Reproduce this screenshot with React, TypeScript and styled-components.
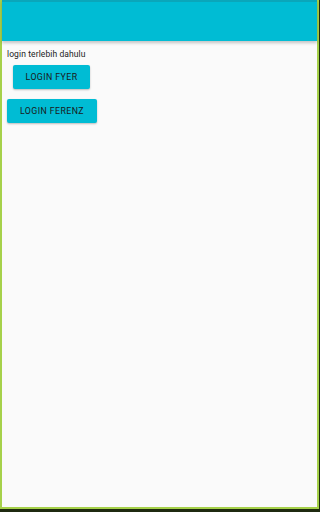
import React from 'react';
import styled, { createGlobalStyle } from 'styled-components';

const GlobalStyle = createGlobalStyle`
  html, body {
    margin: 0;
    padding: 0;
    background: #1f2a10;
  }
  body {
    font-family: Roboto, "Noto Sans", sans-serif;
  }
`;

function App() {
  return (
    <>
      <GlobalStyle />
      <Device>
        <Screen>
          <AppBar>
            <StatusStrip />
          </AppBar>
          <Content>
            <Hint>login terlebih dahulu</Hint>
            <ButtonRow indent={13} gap={6}>
              <LoginButton width={77}>Login Fyer</LoginButton>
            </ButtonRow>
            <ButtonRow indent={7} gap={10}>
              <LoginButton width={90}>Login Ferenz</LoginButton>
            </ButtonRow>
          </Content>
        </Screen>
      </Device>
    </>
  );
}

export default App;

const Device = styled.div`
  width: 100vw;
  height: 100vh;
  box-sizing: border-box;
  padding: 0 1px 3px 0;
  background: #1f2a10;
  display: flex;
`;

const Screen = styled.div`
  flex: 1;
  box-sizing: border-box;
  border-left: 2px solid #a6d14a;
  border-right: 2px solid #a6d14a;
  border-bottom: 2px solid #a6d14a;
  background: #fafafa;
  display: flex;
  flex-direction: column;
`;

const AppBar = styled.div`
  height: 41px;
  background: #00bcd4;
  box-shadow: 0 2px 3px rgba(0, 0, 0, 0.22);
  display: flex;
  flex-direction: column;
  position: relative;
  z-index: 1;
`;

const StatusStrip = styled.div`
  height: 2px;
  background: #0aa6ba;
`;

const Content = styled.div`
  display: flex;
  flex-direction: column;
  padding: 8px 0 0 5px;
`;

const Hint = styled.div`
  font-size: 8.5px;
  line-height: 10px;
  color: #222;
  letter-spacing: 0.1px;
`;

const ButtonRow = styled.div<{ indent: number; gap: number }>`
  display: flex;
  padding-left: ${({ indent }) => indent - 7}px;
  margin-top: ${({ gap }) => gap}px;
`;

const LoginButton = styled.button<{ width: number }>`
  width: ${({ width }) => width}px;
  height: 24px;
  border: none;
  border-radius: 2px;
  background: #00bcd4;
  color: #1a1a1a;
  font-family: Roboto, "Noto Sans", sans-serif;
  font-weight: 400;
  font-size: 8.8px;
  letter-spacing: 0.4px;
  text-transform: uppercase;
  padding: 0;
  box-shadow: 0 1px 2px rgba(0, 0, 0, 0.25);
`;
